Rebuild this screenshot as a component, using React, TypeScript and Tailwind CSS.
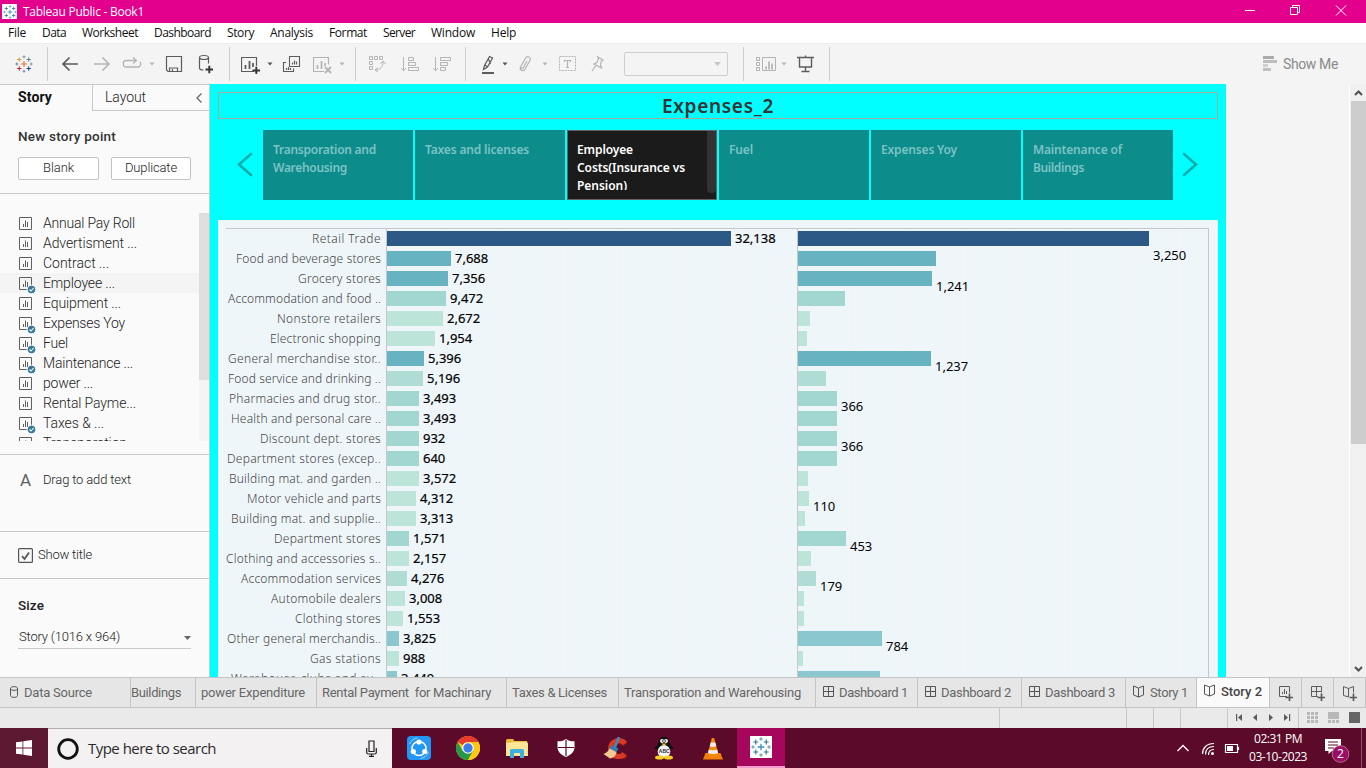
import { useLayoutEffect, useRef } from 'react';
import type { ReactNode } from 'react';

const SEGOE = "font-['Open_Sans','Noto_Sans',sans-serif]";
const UI = "font-['Roboto','Inter',sans-serif]";
const CHART = "font-['Noto_Sans',sans-serif]";

/** Text tracked so that it fills a given width. */
function Fit({ w, children, className = '' }: { w: number; children: string; className?: string }) {
  const ref = useRef<HTMLSpanElement>(null);
  useLayoutEffect(() => {
    const el = ref.current;
    if (!el) return;
    el.style.letterSpacing = '0px';
    const natural = el.getBoundingClientRect().width;
    const gap = (w - natural) / children.length;
    el.style.letterSpacing = `${gap}px`;
  }, [w, children]);
  return (
    <span ref={ref} className={`inline-block shrink-0 whitespace-pre ${className}`}>
      {children}
    </span>
  );
}

/** Icon drawn on the window's own pixel grid: x and y are the grid origin. */
function Ico({ x, y, w, h, children, c = '#5c5c5c' }: { x: number; y: number; w: number; h: number; children: ReactNode; c?: string }) {
  return (
    <svg width={w} height={h} viewBox={`${x} ${y} ${w} ${h}`} fill="none" stroke={c} className="block shrink-0">
      {children}
    </svg>
  );
}

function Caret({ dark = false }: { dark?: boolean }) {
  return (
    <svg width="6" height="4" viewBox="0 0 6 4" className="block shrink-0">
      <path d="M.5 .5h5L3 3.6z" fill={dark ? '#555' : '#b4b4b4'} />
    </svg>
  );
}

function Slot({ className, children }: { className: string; children: ReactNode }) {
  return <div className={`flex h-full shrink-0 items-center justify-center ${className}`}>{children}</div>;
}

function Sep({ className = '' }: { className?: string }) {
  return <div className={`h-[34px] w-px shrink-0 bg-[#cfcfcf] ${className}`} />;
}

function Plus({ x, y, r, c, s = 1.4 }: { x: number; y: number; r: number; c: string; s?: number }) {
  return <path d={`M${x - r} ${y}h${2 * r}M${x} ${y - r}v${2 * r}`} stroke={c} strokeWidth={s} />;
}

function TableauMark({ size, mono = false }: { size: number; mono?: boolean }) {
  const c = mono
    ? ['#3d8fc0', '#2f7596', '#2f7596', '#2f7596', '#2f7596', '#5b93b5', '#5b93b5', '#5b93b5', '#5b93b5']
    : ['#e8762c', '#e39a35', '#5b879b', '#c72035', '#1f447e', '#7199a6', '#59879b', '#7b83b0', '#7099a6'];
  return (
    <svg width={size} height={size} viewBox="0 0 18 18" fill="none" className="block shrink-0">
      <Plus x={9} y={9} r={3} c={c[0]} s={1.2} />
      <Plus x={4.3} y={4.5} r={2.2} c={c[1]} s={1} />
      <Plus x={13.7} y={4.5} r={2.2} c={c[2]} s={1} />
      <Plus x={4.3} y={13.5} r={2.2} c={c[3]} s={1} />
      <Plus x={13.7} y={13.5} r={2.2} c={c[4]} s={1} />
      <Plus x={9} y={1.8} r={1.6} c={c[5]} s={0.9} />
      <Plus x={1.8} y={9} r={1.6} c={c[6]} s={0.9} />
      <Plus x={9} y={16.2} r={1.6} c={c[7]} s={0.9} />
      <Plus x={16.2} y={9} r={1.6} c={c[8]} s={0.9} />
    </svg>
  );
}

function TitleBar() {
  return (
    <div className={`flex h-[23px] shrink-0 items-center bg-[#e3008c] text-white ${SEGOE}`}>
      <div className="ml-0.5 flex size-[15px] items-center justify-center bg-white">
        <TableauMark size={14} mono />
      </div>
      <Fit w={121} className="ml-1.5 text-[12px] leading-[23px]">Tableau Public - Book1</Fit>
      <div className="ml-auto flex h-full items-start">
        <Ico x={1240} y={0} w={110} h={22} c="#fff">
          <path d="M1245 10.5h10" />
          <path d="M1290.500 7.500h7v7h-7zM1292.500 7.500v-2h7v7h-2" />
          <path d="M1336 5.500l10 10M1346 5.500l-10 10" />
        </Ico>
        <div className="w-4" />
      </div>
    </div>
  );
}

const MENUS: [string, number][] = [
  ['File', 18], ['Data', 24], ['Worksheet', 56], ['Dashboard', 57], ['Story', 27],
  ['Analysis', 43], ['Format', 38], ['Server', 32], ['Window', 44], ['Help', 25],
];

function MenuBar() {
  return (
    <div className={`flex h-5 shrink-0 items-center gap-4 bg-white pl-2 text-[12px] leading-5 text-[#111] ${SEGOE}`}>
      {MENUS.map(([t, w]) => <Fit key={t} w={w}>{t}</Fit>)}
    </div>
  );
}

function Toolbar() {
  const g = '#b4b4b4';
  return (
    <div className="flex h-[41px] shrink-0 items-center border-t border-[#ececec] bg-[#f4f4f4]">
      <Slot className="w-[47px]"><TableauMark size={18} /></Slot>
      <Sep />
      <Slot className="w-11">
        <Ico x={61} y={56} w={18} h={16}><path d="M78 64H63.500M69.500 57.500l-6.500 6.500 6.500 6.500" strokeWidth="1.700" /></Ico>
      </Slot>
      <Slot className="w-5">
        <Ico x={93} y={56} w={18} h={16} c={g}><path d="M94 64h14.500M102.500 57.500l6.500 6.500-6.500 6.500" strokeWidth="1.700" /></Ico>
      </Slot>
      <Slot className="ml-1 w-8">
        <Ico x={122} y={56} w={20} h={16} c={g}><path d="M136 60.500h-9.500a3 3 0 0 0 0 6.500h11a3 3 0 0 0 2.500-5M133 57.500l3.500 3-3.500 3" strokeWidth="1.300" /></Ico>
      </Slot>
      <Slot className="w-2"><Caret /></Slot>
      <Slot className="w-9">
        <Ico x={165} y={55} w={18} h={18}><path d="M166.500 56.500h15v15h-13.500l-1.500-1.500zM169.500 71.500v-3.500h8v3.500M172.500 69v2.500" strokeWidth="1.200" /></Ico>
      </Slot>
      <Slot className="w-[27px]">
        <Ico x={197} y={55} w={18} h={20}>
          <ellipse cx="204" cy="58.500" rx="4.500" ry="2" strokeWidth="1.200" />
          <path d="M199.500 58.500v10.500c0 1 1.500 2 4 2M208.500 58.500v6" strokeWidth="1.200" />
          <path d="M205.500 70.500h7.500M209.300 66.700v7.600" stroke="#333" strokeWidth="1.900" />
        </Ico>
      </Slot>
      <Sep className="ml-2.5" />
      <Slot className="ml-1.5 w-[29px]">
        <Ico x={241} y={54} w={20} h={20}>
          <path d="M254 71.500h-12.500v-14h15v8.500" strokeWidth="1.200" />
          <path d="M245.500 69v-4M249.500 69v-8M253 67v-4" strokeWidth="1.800" />
          <path d="M252.500 70.500h7.500M256.300 66.700v7.600" stroke="#333" strokeWidth="1.900" />
        </Ico>
      </Slot>
      <Slot className="ml-px w-2"><Caret dark /></Slot>
      <Slot className="w-[35px]">
        <Ico x={282} y={54} w={19} h={19}>
          <path d="M289.500 55.500h10v10h-10zM286 61.500h-2.500v9h10v-3" strokeWidth="1.100" />
          <path d="M292.500 63.500v-2M294.500 63.500v-4M296.500 63.500v-3M286.500 69v-2M288.500 69v-3M290.500 69v-2" strokeWidth="1.200" />
        </Ico>
      </Slot>
      <Slot className="w-7">
        <Ico x={313} y={54} w={21} h={20} c={g}>
          <path d="M324 71.500h-10.500v-14h15v7" strokeWidth="1.200" />
          <path d="M317.500 69v-4M321.500 69v-8M325 66v-3" strokeWidth="1.700" />
          <path d="M325 67l6 6M331 67l-6 6" strokeWidth="1.900" />
        </Ico>
      </Slot>
      <Slot className="ml-px w-2"><Caret /></Slot>
      <Sep className="ml-[9px]" />
      <Slot className="w-[42px]">
        <Ico x={368} y={56} w={18} h={18} c={g}>
          <path d="M369.500 57.500h3v3h-3zM374.500 57.500h3v3h-3zM379.500 57.500h3v3h-3zM369.500 62.500h3v3h-3zM369.500 67.500h3v3h-3zM375 71c5 0 8-3 8-8M378 68.500l-3 2.500 3 2M380.500 65l2.500-3 2.500 3" />
        </Ico>
      </Slot>
      <Slot className="w-6">
        <Ico x={401} y={56} w={18} h={17} c={g}><path d="M403.500 57v13M401 68l2.500 3 2.500-3M408.500 57.500h5v3h-5zM408.500 62.500h7v3h-7zM408.500 67.500h10v3h-10z" /></Ico>
      </Slot>
      <Slot className="w-10">
        <Ico x={433} y={56} w={18} h={17} c={g}><path d="M435.500 57v13M433 68l2.500 3 2.500-3M440.500 57.500h10v3h-10zM440.500 62.500h7v3h-7zM440.500 67.500h5v3h-5z" /></Ico>
      </Slot>
      <Sep className="ml-[3px]" />
      <Slot className="ml-2.5 w-6">
        <Ico x={480} y={54} w={16} h={20}>
          <path d="M483.500 69.500l1-4 5-9 3 1.500-5 9zM485 65l3 2M488.500 59l2 5" strokeWidth="1.200" />
          <path d="M482 73h12" strokeWidth="2" />
        </Ico>
      </Slot>
      <Slot className="ml-px w-2"><Caret dark /></Slot>
      <Slot className="w-8">
        <Ico x={518} y={55} w={14} h={18} c={g}><path d="M527 61l-3.500 6.500c-1 2-3.500.5-2.500-1.300l4.500-8c1.700-3 6-1 4.500 2l-5 9c-1.600 2.900-5.800 1-4.500-2l.5-1" strokeWidth="1.200" /></Ico>
      </Slot>
      <Slot className="w-2"><Caret /></Slot>
      <Slot className="w-[37px]">
        <Ico x={558} y={55} w={19} h={18} c={g}>
          <path d="M559.500 56.500h16v14h-16z" strokeDasharray="2 1" />
          <path d="M564.500 62v-1.500h6V62M567.500 60.500v7M566 67.500h3" strokeWidth="1.200" />
        </Ico>
      </Slot>
      <Slot className="w-[23px]">
        <Ico x={590} y={55} w={15} h={18} c={g}><path d="M597 56.500l6 3.500-1.500 1-1 3.500 1 3.500-7.500-4 3-1.500 1.500-4zM595.500 66l-3.500 5" strokeWidth="1.200" /></Ico>
      </Slot>
      <div className="ml-[15px] flex h-6 w-[104px] shrink-0 items-center justify-end rounded-xs border border-[#cfcfcf] pr-1.5">
        <svg width="7" height="4" viewBox="0 0 7 4"><path d="M0 0h7L3.500 4z" fill="#c6c6c6" /></svg>
      </div>
      <Sep className="ml-[15px]" />
      <Slot className="ml-2.5 w-[25px]">
        <Ico x={756} y={56} w={21} h={17} c={g}>
          <path d="M756.500 57.500h3v3h-3zM756.500 62.500h3v3h-3zM756.500 67.500h3v3h-3zM762.500 57.500h13v13h-13z" />
          <path d="M766 69.500v-3M769 69.500v-8M772 69.500v-6" strokeWidth="1.700" />
        </Ico>
      </Slot>
      <Slot className="w-2 pl-0.5"><Caret /></Slot>
      <Slot className="w-[38px]">
        <Ico x={797} y={55} w={18} h={18}><path d="M797 57.500h17M799.500 58v9h12v-9M805.500 55.500v2M805.500 67v4M801.500 71.500h8" strokeWidth="1.400" /></Ico>
      </Slot>
      <Sep className="ml-1" />
      <div className="ml-auto flex items-center pr-7">
        <svg width="15" height="16" viewBox="0 0 15 16" className="mr-[5px] block">
          <path d="M0 0h11v3H0z" fill="#ababab" /><path d="M0 4h14v3H0z" fill="#bdbdbd" />
          <path d="M0 8h5v3H0z" fill="#d0d0d0" /><path d="M0 12h8v3H0z" fill="#c0c0c0" />
        </svg>
        <Fit w={55} className={`text-[14px] leading-5 text-[#8a8a8a] ${UI}`}>Show Me</Fit>
      </div>
    </div>
  );
}

function SheetIcon({ used }: { used: boolean }) {
  return (
    <svg width="17" height="17" viewBox="0 0 17 17" fill="none" stroke="#5f5f5f" className="block shrink-0">
      <path d="M.5 .5h12v12H.5z" />
      <path d="M4.500 10V7M6.500 10V3.500M8.500 10V5" />
      {used && <circle cx="12.500" cy="12.500" r="4.300" fill="#33799b" stroke="#fafafa" />}
      {used && <path d="M10.500 12.500l1.500 1.500 2.600-3" stroke="#fff" strokeWidth="1.100" />}
    </svg>
  );
}

const SHEETS: [string, number, boolean][] = [
  ['Annual Pay Roll', 92, false], ['Advertisment ...', 94, false], ['Contract ...', 66, false],
  ['Employee ...', 72, true], ['Equipment ...', 78, false], ['Expenses Yoy', 82, true],
  ['Fuel', 25, true], ['Maintenance ...', 90, true], ['power ...', 50, false],
  ['Rental Payme...', 93, false], ['Taxes & ...', 61, true], ['Transporation ...', 97, false],
];

function SidePanel() {
  return (
    <div className={`flex w-[210px] shrink-0 flex-col border-t border-r border-[#c8c8c8] bg-[#fafafa] font-light text-[#222] ${UI}`}>
      <div className="flex h-[26px] shrink-0">
        <div className="w-[92px] pl-[18px] text-[14px] leading-[25px] font-bold text-[#111]"><Fit w={34}>Story</Fit></div>
        <div className="flex flex-1 items-center border-b border-l border-[#c8c8c8] pl-3 text-[14px] leading-[25px]">
          <Fit w={41}>Layout</Fit>
          <svg width="7" height="10" viewBox="0 0 7 10" className="mr-1.5 ml-auto" fill="none" stroke="#666" strokeWidth="1.300"><path d="M5.500 .5L1 5l4.500 4.500" /></svg>
        </div>
      </div>
      <div className="flex h-[83px] shrink-0 flex-col border-b border-[#c8c8c8] px-[18px] pt-[15px]">
        <Fit w={98} className="self-start text-[13.500px] leading-5 font-medium text-[#333]">New story point</Fit>
        <div className="mt-[11px] flex gap-3 text-[13px] leading-[20px]">
          <div className="flex h-[23px] w-[81px] justify-center rounded-xs border border-[#c4c4c4] bg-white"><Fit w={31}>Blank</Fit></div>
          <div className="flex h-[23px] w-20 justify-center rounded-xs border border-[#c4c4c4] bg-white"><Fit w={52}>Duplicate</Fit></div>
        </div>
      </div>
      <div className="flex h-[261px] shrink-0 border-b border-[#c8c8c8] pt-[19px] pb-[13px]">
        <div className="flex-1 overflow-hidden">
          {SHEETS.map(([t, w, used]) => (
            <div key={t} className={`flex h-5 items-center pl-[19px] ${t.startsWith('Employee') ? 'bg-[#f4f4f4]' : ''}`}>
              <div className="mt-1 mr-[7px]"><SheetIcon used={used} /></div>
              <Fit w={w} className="text-[14px] leading-5">{t}</Fit>
            </div>
          ))}
        </div>
        <div className="w-2.5 bg-[#f4f4f4]"><div className="h-[167px] bg-[#dedede]" /></div>
      </div>
      <div className="flex h-[77px] shrink-0 items-start border-b border-[#c8c8c8] pt-[15px] pl-5">
        <span className="w-[23px] text-[17px] leading-5 font-normal text-[#5f5f5f]">A</span>
        <Fit w={88} className="text-[13px] leading-5">Drag to add text</Fit>
      </div>
      <div className="flex h-[47px] shrink-0 items-center border-b border-[#c8c8c8] pl-[18px]">
        <svg width="15" height="15" viewBox="0 0 15 15" fill="none" className="mr-[5px]">
          <rect x=".6" y=".6" width="13.800" height="13.800" rx="1" stroke="#555" strokeWidth="1.200" />
          <path d="M4 8l2.500 3L11 4.500" stroke="#555" strokeWidth="1.800" />
        </svg>
        <Fit w={54} className="text-[13px] leading-5">Show title</Fit>
      </div>
      <div className="px-[18px] pt-4">
        <div className="text-[13.500px] leading-5 font-medium text-[#222]"><Fit w={26}>Size</Fit></div>
        <div className="mt-3 flex h-[22px] items-center border-b border-[#c8c8c8] pl-px text-[13px]">
          <Fit w={101} className="-mt-0.5 leading-5">{'Story (1016 x 964)'}</Fit>
          <svg width="7" height="4" viewBox="0 0 7 4" className="ml-auto"><path d="M0 0h7L3.500 4z" fill="#666" /></svg>
        </div>
      </div>
    </div>
  );
}

type Point = { lines: [string, number][]; active?: boolean };
const POINTS: Point[] = [
  { lines: [['Transporation and', 103], ['Warehousing', 74]] },
  { lines: [['Taxes and licenses', 104]] },
  { lines: [['Employee', 56], ['Costs(Insurance vs', 108], ['Pension)', 50]], active: true },
  { lines: [['Fuel', 24]] },
  { lines: [['Expenses Yoy', 76]] },
  { lines: [['Maintenance of', 89], ['Buildings', 51]] },
];

function Navigator() {
  return (
    <div className="mt-[11px] flex h-[70px] shrink-0 items-center pl-[27px]">
      <svg width="16" height="26" viewBox="0 0 16 26" className="mr-2.5" fill="none" stroke="#04adad" strokeWidth="2.600" strokeLinecap="round"><path d="M14 2L2 12.500l12 10.500" /></svg>
      <div className="flex h-[70px] gap-0.5">
        {POINTS.map((p) => (
          <div
            key={p.lines[0][0]}
            className={`flex w-[150px] border text-[12px] leading-[18px] font-semibold ${p.active ? 'border-[#6a6060] bg-[#1b1b1b] text-white' : 'border-[#0d8c8c] bg-[#0d8c8c] text-[#7cc3c3]'} ${CHART}`}
          >
            <div className="mt-2.5 ml-[9px] flex h-[49px] flex-1 flex-col items-start overflow-hidden">
              {p.lines.map(([t, w]) => <Fit key={t} w={w}>{t}</Fit>)}
            </div>
            {p.active && <div className="h-[62px] w-[9px] rounded-b-sm bg-[#333]" />}
          </div>
        ))}
      </div>
      <svg width="16" height="26" viewBox="0 0 16 26" className="ml-[9px]" fill="none" stroke="#04adad" strokeWidth="2.600" strokeLinecap="round"><path d="M2 2l12 10.500-12 10.500" /></svg>
    </div>
  );
}

const NAVY = '#2c5985', BLUE = '#67b3c2', TEAL = '#8ac7ce', AQUA = '#a2d6d1', MIST = '#afdcd5', MINT = '#bce4d8';

type Row = { t: string; w: number; c: string; a: number; v: string; b: number; v2?: string };
const ROWS: Row[] = [
  { t: 'Retail Trade', w: 69, c: NAVY, a: 344, v: '32,138', b: 351, v2: '3,250' },
  { t: 'Food and beverage stores', w: 145, c: BLUE, a: 64, v: '7,688', b: 138 },
  { t: 'Grocery stores', w: 83, c: BLUE, a: 61, v: '7,356', b: 134, v2: '1,241' },
  { t: 'Accommodation and food ..', w: 153, c: AQUA, a: 59, v: '9,472', b: 47 },
  { t: 'Nonstore retailers', w: 104, c: MINT, a: 56, v: '2,672', b: 12 },
  { t: 'Electronic shopping', w: 111, c: MINT, a: 48, v: '1,954', b: 9 },
  { t: 'General merchandise stor..', w: 153, c: BLUE, a: 37, v: '5,396', b: 133, v2: '1,237' },
  { t: 'Food service and drinking ..', w: 153, c: MIST, a: 36, v: '5,196', b: 28 },
  { t: 'Pharmacies and drug stor..', w: 152, c: AQUA, a: 32, v: '3,493', b: 39, v2: '366' },
  { t: 'Health and personal care ..', w: 150, c: AQUA, a: 32, v: '3,493', b: 39 },
  { t: 'Discount dept. stores', w: 121, c: AQUA, a: 32, v: '932', b: 39, v2: '366' },
  { t: 'Department stores (excep..', w: 154, c: AQUA, a: 32, v: '640', b: 39 },
  { t: 'Building mat. and garden ..', w: 152, c: MINT, a: 32, v: '3,572', b: 10 },
  { t: 'Motor vehicle and parts', w: 134, c: MINT, a: 29, v: '4,312', b: 11, v2: '110' },
  { t: 'Building mat. and supplie..', w: 150, c: MINT, a: 29, v: '3,313', b: 7 },
  { t: 'Department stores', w: 107, c: AQUA, a: 22, v: '1,571', b: 48, v2: '453' },
  { t: 'Clothing and accessories s..', w: 155, c: MINT, a: 22, v: '2,157', b: 13 },
  { t: 'Accommodation services', w: 140, c: MIST, a: 20, v: '4,276', b: 18, v2: '179' },
  { t: 'Automobile dealers', w: 110, c: MINT, a: 18, v: '3,008', b: 6 },
  { t: 'Clothing stores', w: 86, c: MINT, a: 16, v: '1,553', b: 6 },
  { t: 'Other general merchandis..', w: 154, c: TEAL, a: 12, v: '3,825', b: 84, v2: '784' },
  { t: 'Gas stations', w: 71, c: MINT, a: 12, v: '988', b: 5 },
  { t: 'Warehouse clubs and su..', w: 150, c: TEAL, a: 10, v: '3,449', b: 82 },
];

function Grid({ lines }: { lines: number[] }) {
  return (
    <svg width="410" height="449" className="absolute inset-0">
      {lines.map((x) => <path key={x} d={`M${x + 0.5} 0v449`} stroke="#f3f1f3" />)}
    </svg>
  );
}

function Chart() {
  return (
    <div className={`mt-5 mr-2 ml-2 flex flex-1 overflow-hidden bg-[#eff6fa] pt-2 pl-2 text-[13px] leading-5 ${CHART}`}>
      <div className="w-[161px] shrink-0 border-t border-r border-[#c4c8ca] pr-[5px] text-[12px] font-light text-[#444]">
        {ROWS.map((r) => (
          <div key={r.t} className="flex h-5 items-center justify-end"><Fit w={r.w}>{r.t}</Fit></div>
        ))}
      </div>
      <div className="relative w-[411px] shrink-0 border-t border-r border-[#c4c8ca] text-black">
        <Grid lines={[56, 115, 173, 232, 291, 350]} />
        {ROWS.map((r) => (
          <div key={r.t} className="relative flex h-5 items-start">
            <div className="mt-0.5 h-[15px]" style={{ width: r.a, background: r.c }} />
            <span className="ml-1 leading-[19px] [-webkit-text-stroke:0.2px_#000]">{r.v}</span>
          </div>
        ))}
      </div>
      <div className="relative w-[411px] shrink-0 border-t border-r border-[#c4c8ca] text-black">
        <Grid lines={[53, 107, 162, 216, 270, 324, 378]} />
        {ROWS.map((r, i) => (
          <div key={r.t} className="relative flex h-5 items-start">
            <div className="mt-0.5 h-[15px]" style={{ width: r.b, background: r.c }} />
            {r.v2 && <span className={`relative z-10 ml-1 leading-[19px] ${i === 0 ? 'top-[17px]' : 'top-2'}`}>{r.v2}</span>}
          </div>
        ))}
      </div>
    </div>
  );
}

function Canvas() {
  return (
    <div className="flex w-[1016px] shrink-0 flex-col bg-[#00ffff]">
      <div className={`mx-2 mt-2 flex h-[27px] shrink-0 items-center justify-center border border-[#a9a797] text-[19px] leading-[25px] font-semibold text-[#333] ${CHART}`}>
        <Fit w={112} className="mt-0.5">Expenses_2</Fit>
      </div>
      <Navigator />
      <Chart />
    </div>
  );
}

function GridIcon() {
  return (
    <svg width="12" height="12" viewBox="0 0 12 12" fill="none" stroke="#555" className="mr-1 -mt-0.5 shrink-0"><path d="M.5 .5h10v10H.5zM5.500 .5v10M.5 5.500h10" /></svg>
  );
}
function BookIcon() {
  return (
    <svg width="12" height="13" viewBox="0 0 12 13" fill="none" stroke="#555" className="mr-[5px] -mt-0.5 shrink-0"><path d="M.5 1l5 2 5-2v9l-5 2-5-2zM5.500 3v9" /></svg>
  );
}

function Tab({ className, children, active = false }: { className: string; children: ReactNode; active?: boolean }) {
  return (
    <div className={`flex h-full shrink-0 items-center overflow-hidden border-r border-[#c4c4c4] ${active ? 'bg-[#fafafa] pb-0.5 font-medium' : ''} ${className}`}>
      {children}
    </div>
  );
}

function SheetTabs() {
  return (
    <div className={`flex h-[31px] shrink-0 border-t border-b border-[#c4c4c4] bg-[#e6e6e6] text-[13px] leading-5 text-[#666] ${UI}`}>
      <Tab className="w-[131px] pl-2.5">
        <svg width="9" height="12" viewBox="0 0 9 12" fill="none" stroke="#555" className="mr-[5px] -mt-0.5 shrink-0"><path d="M.5 2.500v7c0 2.500 7 2.500 7 0v-7M.5 2.500c0-2.500 7-2.500 7 0s-7 2.500-7 0" /></svg>
        <Fit w={68}>Data Source</Fit>
      </Tab>
      <Tab className="w-[65px]"><Fit w={50}>Buildings</Fit></Tab>
      <Tab className="w-[121px] pl-[5px]"><Fit w={104}>power Expenditure</Fit></Tab>
      <Tab className="w-[190px] pl-[5px]"><Fit w={169}>{'Rental Payment  for Machinary'}</Fit></Tab>
      <Tab className="w-28 pl-[5px]"><Fit w={95}>{'Taxes & Licenses'}</Fit></Tab>
      <Tab className="w-[197px] pl-[5px]"><Fit w={177}>Transporation and Warehousing</Fit></Tab>
      <Tab className="w-[102px] pl-[7px]"><GridIcon /><Fit w={69}>Dashboard 1</Fit></Tab>
      <Tab className="w-[104px] pl-[7px]"><GridIcon /><Fit w={70}>Dashboard 2</Fit></Tab>
      <Tab className="w-[104px] pl-[7px]"><GridIcon /><Fit w={70}>Dashboard 3</Fit></Tab>
      <Tab className="w-[71px] pl-[7px]"><BookIcon /><Fit w={38}>Story 1</Fit></Tab>
      <Tab className="w-[73px] pl-[7px] text-[#444]" active><BookIcon /><Fit w={41}>Story 2</Fit></Tab>
      <Tab className="w-8 justify-center">
        <Ico x={1278} y={685} w={15} h={16}>
          <path d="M1287 696.500h-7.500v-10h10v6M1282.500 694v-2M1284.500 694v-5M1286.500 694v-3" />
          <path d="M1285.500 697.500h8M1289.500 693.500v8" strokeWidth="1.700" />
        </Ico>
      </Tab>
      <Tab className="w-8 justify-center">
        <Ico x={1310} y={685} w={15} h={16}>
          <path d="M1318 696.500h-6.500v-10h10v6M1316.500 687v9M1311.500 691.500h10" />
          <path d="M1317.500 697.500h8M1321.500 693.500v8" strokeWidth="1.700" />
        </Ico>
      </Tab>
      <Tab className="w-8 justify-center">
        <Ico x={1342} y={685} w={15} h={16}>
          <path d="M1348.500 697l-5-1.500v-9l5 2 5-2v6M1348.500 688.500v8.500" />
          <path d="M1349.500 697.500h8M1353.500 693.500v8" strokeWidth="1.700" />
        </Ico>
      </Tab>
    </div>
  );
}

function StatusBar() {
  return (
    <div className="flex h-5 shrink-0 bg-[#eaeaea]">
      <div className="w-[1000px] border-r border-[#c8c8c8]" />
      <div className="w-[127px] border-r border-[#c8c8c8]" />
      <div className="w-[27px] border-r border-[#c8c8c8]" />
      <div className="w-[27px] border-r border-[#c8c8c8]" />
      <div className="w-[47px] border-r border-[#c8c8c8]" />
      <div className="w-[71px] border-r border-[#c8c8c8]">
        <Ico x={1228} y={708} w={70} h={20} c="none">
          <g fill="#5c5c5c">
            <path d="M1236 714h1.200v7h-1.200zM1242 714v7l-4-3.500zM1257 714v7l-4-3.500zM1269 714v7l4-3.500zM1284 714v7l4-3.500zM1289 714h1.200v7h-1.200z" />
          </g>
        </Ico>
      </div>
      <Ico x={1299} y={708} w={66} h={20} c="none">
        <g fill="#b8b8b8">
          {[0, 4, 8].map((dx) => [0, 4, 8].map((dy) => <rect key={`${dx}-${dy}`} x={1307 + dx} y={712 + dy} width="3" height="3" />))}
          <path d="M1328 712h11v7h-11zM1328 720h3v3h-3zM1332 720h3v3h-3zM1336 720h3v3h-3z" />
        </g>
        <path d="M1349 712h11v11h-11z" fill="#666" />
      </Ico>
    </div>
  );
}

function App24({ children, active = false }: { children: ReactNode; active?: boolean }) {
  return (
    <div className={`flex h-full w-12 shrink-0 items-center justify-center ${active ? 'border-b-2 border-[#f49ccb] bg-[#a6075c]' : ''}`}>
      {children}
    </div>
  );
}

function Taskbar() {
  return (
    <div className={`flex h-10 shrink-0 bg-[#5c0a29] text-white ${SEGOE}`}>
      <div className="flex w-12 items-center justify-center bg-[#5d1931]">
        <svg width="16" height="16" viewBox="0 0 16 16" fill="#fff"><path d="M0 2.300l6.500-.9v6.200H0zM7.300 1.300L16 0v7.600H7.300zM0 8.400h6.500v6.200L0 13.700zM7.300 8.400H16V16l-8.700-1.300z" /></svg>
      </div>
      <div className="flex w-[344px] items-center border-t border-[#b5afb2] bg-[#f3f1f2] pl-[9px] text-[#2b2b2b]">
        <svg width="22" height="22" viewBox="0 0 22 22" fill="none"><circle cx="11" cy="11" r="9.300" stroke="#111" strokeWidth="2.800" /></svg>
        <Fit w={128} className="-mt-0.5 ml-[9px] text-[15px] leading-6">Type here to search</Fit>
        <svg width="11" height="17" viewBox="0 0 11 17" className="mr-[15px] ml-auto" fill="none" stroke="#222" strokeWidth="1.200"><path d="M3 1h5v10.500H3zM.7 8v4.500c0 1 .6 1.500 1.500 1.500h6.600c.9 0 1.500-.5 1.500-1.500V8M5.500 14v2.400M3 16.300h5" /></svg>
      </div>
      <div className="flex gap-px pl-[3px]">
        <App24>
          <svg width="24" height="24" viewBox="0 0 24 24" fill="none">
            <rect width="24" height="24" rx="4" fill="#2297f5" />
            <circle cx="12" cy="12.500" r="7" stroke="#fff" strokeWidth="1.500" />
            <path d="M2.500 8a10.500 10.500 0 0 1 8-6M21.500 16a10.500 10.500 0 0 1-8 6.500" stroke="#9fd2ff" />
            <circle cx="12" cy="6" r="2.600" fill="#fff" /><circle cx="6.300" cy="15.500" r="2.600" fill="#fff" /><circle cx="17.700" cy="15.500" r="2.600" fill="#fff" />
          </svg>
        </App24>
        <App24>
          <svg width="24" height="24" viewBox="0 0 24 24">
            <circle cx="12" cy="12" r="12" fill="#fdc814" />
            <path d="M1.600 6A12 12 0 0 1 22.400 6H12a6 6 0 0 0-5.200 3z" fill="#e63b2e" />
            <path d="M1.600 6A12 12 0 0 0 12 24l5.200-9-10.400 0z" fill="#279847" />
            <path d="M12 24l5.200-9a6 6 0 0 0 0-9h5.200A12 12 0 0 1 12 24z" fill="#fdc814" />
            <circle cx="12" cy="12" r="5.800" fill="#fff" /><circle cx="12" cy="12" r="4.700" fill="#3b7ded" />
          </svg>
        </App24>
        <App24>
          <svg width="22" height="19" viewBox="0 0 22 19">
            <path d="M0 1.500Q0 0 1.500 0H7l1.500 2H21v4H0z" fill="#e9b93b" />
            <path d="M0 4l8-1h12.500q1.500 0 1.500 1.500V17H0z" fill="#ffe694" />
            <path d="M4 19v-7.500Q4 10 5.500 10h11Q18 10 18 11.500V19h-4v-5H8v5z" fill="#3caee0" />
          </svg>
        </App24>
        <App24>
          <svg width="18" height="18" viewBox="0 0 18 18"><path d="M9 0c2.500 2 5 2.500 8.500 2.300V8c0 5-4 8-8.500 10C4.500 16 .5 13 .5 8V2.300C4 2.500 6.500 2 9 0z" fill="#fff" /><path d="M9 1v16M1 8.500h16" stroke="#5c0a29" strokeWidth="1.200" /></svg>
        </App24>
        <App24>
          <svg width="24" height="22" viewBox="0 0 24 22" fill="none">
            <path d="M22.500 7.500a8 8 0 1 0 0 9.500" stroke="#8e1c12" strokeWidth="6" />
            <path d="M22 6.500A8 8 0 1 0 21.500 17" stroke="#d93a27" strokeWidth="5" />
            <path d="M15.500 1l-3.500 9" stroke="#318fc9" strokeWidth="2.500" strokeLinecap="round" />
            <path d="M8.500 8.500l7 3-2 3.500-7-3z" fill="#2e7fb5" />
            <path d="M6.500 11.500l7 3.500c-.5 4-3 6-6.500 6.500L.5 17c3-1 5-3 6-5.500z" fill="#f0c692" />
          </svg>
        </App24>
        <App24>
          <svg width="24" height="24" viewBox="0 0 24 24">
            <path d="M8 2.500C9 0 15 0 16 2.500c1 3 1.500 6 6 9.500l-3.500 1.500L17 21H7l-1.500-7.500L2 12c4.500-3.500 5-6.500 6-9.500z" fill="#111" />
            <ellipse cx="12" cy="15.500" rx="6.300" ry="6.500" fill="#f2f2f2" />
            <circle cx="10" cy="5" r="1.900" fill="#fff" /><circle cx="14" cy="5" r="1.900" fill="#fff" />
            <circle cx="10.500" cy="5" r=".7" fill="#111" /><circle cx="13.500" cy="5" r=".7" fill="#111" />
            <path d="M9.500 7.500h5L12 10z" fill="#f8c51c" />
            <ellipse cx="7.500" cy="21.500" rx="4.500" ry="2" fill="#f5cf25" /><ellipse cx="16.500" cy="21.500" rx="4.500" ry="2" fill="#f5cf25" />
            <text x="6.800" y="16.500" fontSize="5" fontWeight="700" fill="#333" fontFamily="Liberation Sans, sans-serif">ABC</text>
          </svg>
        </App24>
        <App24>
          <svg width="22" height="23" viewBox="0 0 22 23">
            <path d="M3.500 16h15l2.500 6.500H1z" fill="#f08205" />
            <path d="M9.800 1h2.400l4.300 17q-5.500 2.500-11 0z" fill="#f58a0a" />
            <path d="M8.700 5.500h4.600l1 3.800q-3.300 1.200-6.600 0zM6.800 12.500q4.200 1.500 8.400 0l.9 3.500q-5.100 1.800-10.200 0z" fill="#eee" />
          </svg>
        </App24>
        <div className="-ml-px">
          <App24 active>
            <div className="flex size-[22px] items-center justify-center bg-white"><TableauMark size={20} mono /></div>
          </App24>
        </div>
      </div>
      <div className="ml-auto flex items-center">
        <Ico x={1176} y={738} w={66} h={20} c="#fff">
          <path d="M1177.500 751l5.500-5.500 5.500 5.500" strokeWidth="1.300" />
          <path d="M1202.500 754c0-6 4-10.500 11.500-10.500M1205.500 754.500c0-5 3-8 8.500-8M1208.500 755c0-3.500 2-5.500 5.500-5.500" strokeWidth="1.200" />
          <circle cx="1212.500" cy="753.500" r="1.500" fill="#fff" stroke="none" />
          <path d="M1225.500 744.500h12v8h-12zM1238.500 747v3" strokeWidth="1.200" /><path d="M1227 746h6v5h-6z" fill="#fff" stroke="none" />
        </Ico>
        <div className="ml-1.5 flex w-[60px] flex-col items-center text-[12px] leading-[18px]">
          <Fit w={48}>02:31 PM</Fit>
          <Fit w={58}>03-10-2023</Fit>
        </div>
        <svg width="26" height="26" viewBox="0 0 26 26" className="mt-1 ml-[17px]">
          <path d="M0 2h16v12H7l-3.500 3V14H0z" fill="#fff" /><path d="M3 5h10M3 8h10M3 11h6" stroke="#5c0a29" strokeWidth="1.200" />
          <circle cx="15.500" cy="17" r="8.300" fill="#9b0e66" stroke="#b86a95" />
          <text x="12.100" y="21.300" fontSize="12" fill="#fff" fontFamily="Open Sans, sans-serif">2</text>
        </svg>
        <div className="mr-1 ml-2.5 h-10 w-px bg-[#8d5069]" />
      </div>
    </div>
  );
}

export default function App() {
  return (
    <div className="flex h-[768px] w-[1366px] flex-col overflow-hidden">
      <TitleBar />
      <MenuBar />
      <Toolbar />
      <div className="flex h-[593px] shrink-0 overflow-hidden">
        <SidePanel />
        <Canvas />
        <div className="flex-1 bg-[#f4f4f4]" />
        <div className="flex w-[17px] flex-col items-center border-l border-white bg-[#f0f0f0]">
          <svg width="9" height="17" viewBox="0 0 9 17" fill="none" stroke="#505050" strokeWidth="2"><path d="M1 11l3.500-3.500L8 11" /></svg>
          <div className="h-[343px] w-[15px] bg-[#cdcdcd]" />
          <svg width="9" height="17" viewBox="0 0 9 17" className="mt-auto" fill="none" stroke="#505050" strokeWidth="2"><path d="M1 7l3.500 3.500L8 7" /></svg>
        </div>
      </div>
      <SheetTabs />
      <StatusBar />
      <Taskbar />
    </div>
  );
}
